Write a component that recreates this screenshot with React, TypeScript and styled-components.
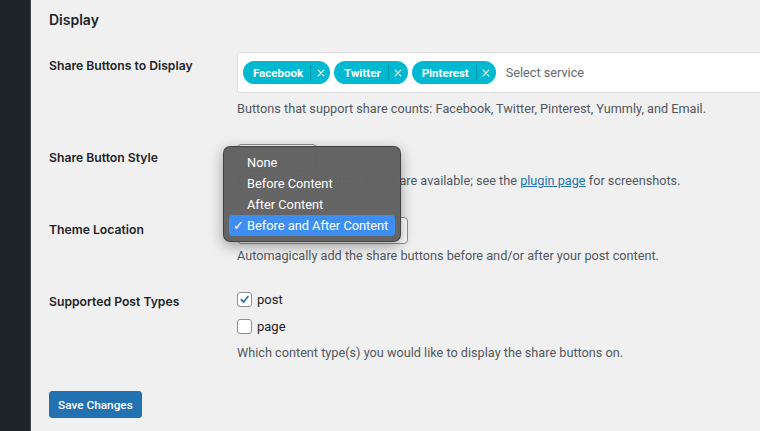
import React from 'react';
import styled, { createGlobalStyle } from 'styled-components';

const GlobalStyle = createGlobalStyle`
	html, body {
		margin: 0;
		padding: 0;
		background: #f0f0f1;
		font-family: Roboto, "Noto Sans", "Liberation Sans", sans-serif;
		color: #1d2327;
	}
`;

const Page = styled.div`
	display: flex;
	width: 760px;
	height: 431px;
	overflow: hidden;
	background: #f0f0f1;
`;

const Sidebar = styled.div`
	flex: 0 0 30px;
	background: #1d2327;
	border-right: 1px solid #3c434a;
`;

const Main = styled.div`
	flex: 1;
	padding: 10px 0 0 18px;
	min-width: 0;
`;

const Heading = styled.h2`
	margin: 0 0 22px;
	font-family: Inter, Roboto, sans-serif;
	font-size: 14px;
	font-weight: 600;
	line-height: 20px;
`;

const Row = styled.div<{ $gap: number }>`
	display: grid;
	grid-template-columns: 188px 1fr;
	margin-bottom: ${p => p.$gap}px;
`;

const Label = styled.div<{ $top: number }>`
	padding-top: ${p => p.$top}px;
	font-family: Inter, Roboto, sans-serif;
	font-size: 12.2px;
	font-weight: 600;
	line-height: 18px;
`;

const Field = styled.div`
	position: relative;
	min-width: 0;
`;

const TagBox = styled.div`
	display: flex;
	align-items: center;
	gap: 4px;
	height: 41px;
	box-sizing: border-box;
	padding: 0 5px;
	margin-right: -40px;
	background: #fff;
	border: 1px solid #dcdcde;
	border-radius: 3px;
`;

const Chip = styled.span`
	display: inline-flex;
	align-items: center;
	height: 23px;
	padding-left: 10px;
	background: #00b9d1;
	border-radius: 12px;
	color: #fff;
	font-size: 11.5px;
	font-weight: 700;
`;

const ChipClose = styled.span`
	display: inline-flex;
	align-items: center;
	justify-content: center;
	width: 19px;
	height: 15px;
	margin-left: 7px;
	border-left: 1px solid rgba(0, 0, 0, 0.18);
	svg {
		width: 8px;
		height: 8px;
	}
`;

const Placeholder = styled.span`
	margin-left: 6px;
	font-size: 12.7px;
	color: #646970;
`;

const Help = styled.p<{ $top: number }>`
	margin: ${p => p.$top}px 0 0;
	font-size: 12.7px;
	line-height: 18px;
	color: #50575e;
	white-space: nowrap;
`;

const Link = styled.a`
	color: #2271b1;
	text-decoration: underline;
`;

const Select = styled.div<{ $w: number }>`
	width: ${p => p.$w}px;
	height: 27px;
	box-sizing: border-box;
	background: #fff;
	border: 1px solid #8c8f94;
	border-radius: 4px;
`;

const Popup = styled.ul`
	position: absolute;
	left: -14px;
	top: -71px;
	width: 178px;
	box-sizing: border-box;
	margin: 0;
	padding: 5px 5px;
	list-style: none;
	background: rgba(98, 98, 98, 0.98);
	border: 1px solid rgba(0, 0, 0, 0.35);
	border-radius: 7px;
	box-shadow: 0 4px 14px rgba(0, 0, 0, 0.35);
	z-index: 2;
`;

const Option = styled.li<{ $active?: boolean }>`
	position: relative;
	height: 21px;
	line-height: 21px;
	padding-left: 18px;
	border-radius: 4px;
	font-size: 12.8px;
	color: #fff;
	background: ${p => (p.$active ? '#3d8ef0' : 'transparent')};
`;

const Tick = styled.span`
	position: absolute;
	left: 4px;
	top: 0;
	font-size: 13px;
`;

const Checks = styled.div`
	margin-top: -2px;
`;

const CheckLine = styled.label`
	display: flex;
	align-items: center;
	gap: 5px;
	height: 18px;
	margin-bottom: 9px;
	font-size: 13px;
	color: #1d2327;
`;

const Box = styled.span`
	display: inline-flex;
	align-items: center;
	justify-content: center;
	width: 13px;
	height: 13px;
	background: #fff;
	border: 1px solid #8c8f94;
	border-radius: 3px;
	svg {
		width: 11px;
		height: 11px;
	}
`;

const SaveButton = styled.button`
	margin-top: 29px;
	height: 27px;
	padding: 0 8px;
	background: #2271b1;
	border: 1px solid #2271b1;
	border-radius: 3px;
	color: #fff;
	font-family: inherit;
	font-size: 11.8px;
	font-weight: 500;
`;

const XIcon = () => (
	<svg viewBox='0 0 10 10' fill='none' stroke='#fff' strokeWidth='1.4' strokeLinecap='round'>
		<path d='M1.5 1.5 L8.5 8.5 M8.5 1.5 L1.5 8.5' />
	</svg>
);

const CheckIcon = () => (
	<svg viewBox='0 0 12 12' fill='none' stroke='#2271b1' strokeWidth='1.8' strokeLinecap='round' strokeLinejoin='round'>
		<path d='M2.5 6.2 L5 8.8 L9.8 2.8' />
	</svg>
);

const services = ['Facebook', 'Twitter', 'Pinterest'];
const locations = ['None', 'Before Content', 'After Content', 'Before and After Content'];

export default function App() {
	return (
		<Page>
			<GlobalStyle />
			<Sidebar />
			<Main>
				<Heading>Display</Heading>
				<Row $gap={26}>
					<Label $top={5}>Share Buttons to Display</Label>
					<Field>
						<TagBox>
							{services.map(s => (
								<Chip key={s}>
									{s}
									<ChipClose>
										<XIcon />
									</ChipClose>
								</Chip>
							))}
							<Placeholder>Select service</Placeholder>
						</TagBox>
						<Help $top={7}>Buttons that support share counts: Facebook, Twitter, Pinterest, Yummly, and Email.</Help>
					</Field>
				</Row>
				<Row $gap={27}>
					<Label $top={5}>Share Button Style</Label>
					<Field>
						<Select $w={80} />
						<Help $top={1}>
							Different share button styles are available; see the <Link href='#'>plugin page</Link> for screenshots.
						</Help>
					</Field>
				</Row>
				<Row $gap={27}>
					<Label $top={4}>Theme Location</Label>
					<Field>
						<Select $w={171} />
						<Popup>
							{locations.map((l, i) => (
								<Option key={l} $active={i === locations.length - 1}>
									{i === locations.length - 1 && <Tick>✓</Tick>}
									{l}
								</Option>
							))}
						</Popup>
						<Help $top={3}>Automagically add the share buttons before and/or after your post content.</Help>
					</Field>
				</Row>
				<Row $gap={0}>
					<Label $top={1}>Supported Post Types</Label>
					<Field>
						<Checks>
							<CheckLine>
								<Box>
									<CheckIcon />
								</Box>
								post
							</CheckLine>
							<CheckLine>
								<Box />
								page
							</CheckLine>
						</Checks>
						<Help $top={0}>Which content type(s) you would like to display the share buttons on.</Help>
					</Field>
				</Row>
				<SaveButton>Save Changes</SaveButton>
			</Main>
		</Page>
	);
}
